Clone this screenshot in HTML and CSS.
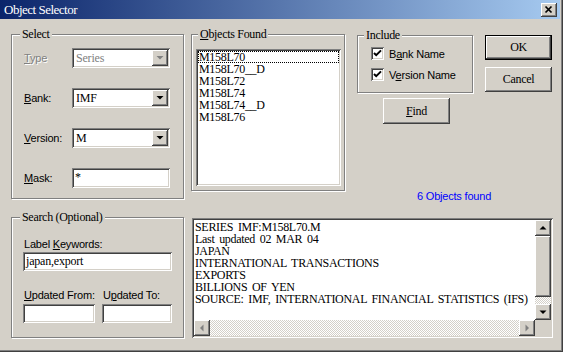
FILE: index.html
```html
<!DOCTYPE html>
<html>
<head>
    <title>Object Selector</title>
    <link rel="stylesheet" href="styles.css">
</head>
<body>
<div class="window">
    <div class="titlebar">
        <span class="title">Object Selector</span>
        <div class="close">
            <svg width="16" height="14" viewBox="0 0 16 14"><path d="M4.5 3.5l6 6M10.5 3.5l-6 6" stroke="#000" stroke-width="1.7"/></svg>
        </div>
    </div>

    <div class="client">
        <div class="top-row">
            <div class="group select-group">
                <div class="group-title">Select</div>
                <div class="fields">
                    <div class="field-row disabled">
                        <span class="label"><u>T</u>ype</span>
                        <div class="combo">
                            <span class="value">Series</span>
                            <span class="drop"><svg width="12" height="12" viewBox="0 0 12 12"><path d="M2.5 4h7l-3.5 3.5z" fill="#808080"/></svg></span>
                        </div>
                    </div>
                    <div class="field-row">
                        <span class="label"><u>B</u>ank:</span>
                        <div class="combo">
                            <span class="value">IMF</span>
                            <span class="drop"><svg width="12" height="12" viewBox="0 0 12 12"><path d="M2.5 4h7l-3.5 3.5z"/></svg></span>
                        </div>
                    </div>
                    <div class="field-row">
                        <span class="label"><u>V</u>ersion:</span>
                        <div class="combo">
                            <span class="value">M</span>
                            <span class="drop"><svg width="12" height="12" viewBox="0 0 12 12"><path d="M2.5 4h7l-3.5 3.5z"/></svg></span>
                        </div>
                    </div>
                    <div class="field-row">
                        <span class="label"><u>M</u>ask:</span>
                        <div class="field mask">*</div>
                    </div>
                </div>
            </div>

            <div class="group objects-group">
                <div class="group-title"><u>O</u>bjects Found</div>
                <div class="listbox">
                    <div class="item focused">M158L70</div>
                    <div class="item">M158L70__D</div>
                    <div class="item">M158L72</div>
                    <div class="item">M158L74</div>
                    <div class="item">M158L74__D</div>
                    <div class="item">M158L76</div>
                </div>
            </div>

            <div class="right-col">
                <div class="include-row">
                    <div class="group include-group">
                        <div class="group-title">Include</div>
                        <div class="checks">
                            <div class="check-row">
                                <span class="checkbox"><svg width="9" height="9" viewBox="0 0 9 9"><path d="M1 4l2.2 2.2L8 1.4" stroke="#000" stroke-width="2" fill="none"/></svg></span>
                                <span>B<u>a</u>nk Name</span>
                            </div>
                            <div class="check-row">
                                <span class="checkbox"><svg width="9" height="9" viewBox="0 0 9 9"><path d="M1 4l2.2 2.2L8 1.4" stroke="#000" stroke-width="2" fill="none"/></svg></span>
                                <span>V<u>e</u>rsion Name</span>
                            </div>
                        </div>
                    </div>
                    <div class="buttons">
                        <div class="btn default">OK</div>
                        <div class="btn">Cancel</div>
                    </div>
                </div>
                <div class="btn find"><u>F</u>ind</div>
                <div class="status">6 Objects found</div>
            </div>
        </div>

        <div class="bottom-row">
            <div class="group search-group">
                <div class="group-title">Search (Optional)</div>
                <div class="kw-label">Label <u>K</u>eywords:</div>
                <div class="field keywords">japan,export</div>
                <div class="updated">
                    <span><u>U</u>pdated From:</span>
                    <span>U<u>p</u>dated To:</span>
                    <div class="field"></div>
                    <div class="field"></div>
                </div>
            </div>

            <div class="textbox">
                <div class="text">SERIES IMF:M158L70.M
Last updated 02 MAR 04
JAPAN
INTERNATIONAL TRANSACTIONS
EXPORTS
BILLIONS OF YEN
SOURCE: IMF, INTERNATIONAL FINANCIAL STATISTICS (IFS)</div>
                <div class="vscroll">
                    <span class="sb-btn"><svg width="12" height="12" viewBox="0 0 12 12"><path d="M2.5 7.5h7L6 4z"/></svg></span>
                    <span class="sb-thumb"></span>
                    <span class="sb-track"></span>
                    <span class="sb-btn"><svg width="12" height="12" viewBox="0 0 12 12"><path d="M2.5 4.5h7L6 8z"/></svg></span>
                </div>
                <div class="hscroll">
                    <span class="sb-btn"><svg width="12" height="12" viewBox="0 0 12 12"><path d="M7.5 2.5v7L4 6z" fill="#808080"/></svg></span>
                    <span class="sb-track"></span>
                    <span class="sb-btn"><svg width="12" height="12" viewBox="0 0 12 12"><path d="M4.5 2.5v7L8 6z" fill="#808080"/></svg></span>
                </div>
                <div class="corner"></div>
            </div>
        </div>
    </div>
</div>
</body>
</html>
```

FILE: styles.css
```css
body { margin: 0; background: #d4d0c8; font-family: "Liberation Sans", Arial, sans-serif; font-size: 11px; letter-spacing: -0.2px; color: #000; }
u { text-decoration-thickness: 1px; text-underline-offset: 1px; }

.window { width: 563px; height: 352px; box-sizing: border-box; padding: 0 3px 4px 0; background: #d4d0c8; box-shadow: inset -1px -1px #404040, inset -2px -2px #808080; }

.titlebar { height: 19px; display: flex; align-items: center; justify-content: space-between; padding: 0 3px 0 4px; background: linear-gradient(to right, #0a246a, #a6caf0); }
.title { color: #fff; font-family: "Liberation Serif", "Times New Roman", serif; font-size: 13px; letter-spacing: -0.5px; }
.close { width: 16px; height: 14px; background: #d4d0c8; box-shadow: inset -1px -1px #404040, inset 1px 1px #fff, inset -2px -2px #808080; display: flex; }

/* raised / sunken edges, win classic */
.btn, .drop, .sb-btn, .sb-thumb { background: #d4d0c8; box-shadow: inset -1px -1px #404040, inset 1px 1px #fff, inset -2px -2px #808080; }
.combo, .field, .listbox, .textbox, .checkbox { background: #fff; box-shadow: inset 1px 1px #808080, inset -1px -1px #fff, inset 2px 2px #404040, inset -2px -2px #d4d0c8; }

.group { box-sizing: border-box; border: 1px solid #808080; box-shadow: inset 1px 1px #fff, 1px 1px #fff; }
.group-title { width: fit-content; height: 14px; margin: -8px 0 0 8px; padding: 0 2px; background: #d4d0c8; font-family: "Liberation Serif", "Times New Roman", serif; font-size: 12px; line-height: 14px; letter-spacing: -0.3px; }

.top-row { height: 180px; display: flex; align-items: flex-start; padding-left: 11px; }

.select-group { width: 173px; height: 165px; margin-top: 15px; }
.fields { margin-top: 7px; padding-left: 12px; display: flex; flex-direction: column; gap: 20px; }
.field-row { height: 20px; display: flex; align-items: center; }
.label { width: 48px; }
.disabled .label, .disabled .value { color: #808080; text-shadow: 1px 1px #fff; }
.combo { width: 98px; height: 20px; box-sizing: border-box; padding: 2px; display: flex; }
.value { flex: 1; padding-left: 2px; font-family: "Liberation Serif", "Times New Roman", serif; font-size: 12px; line-height: 16px; }
.drop { width: 16px; height: 16px; display: flex; align-items: center; justify-content: center; }
.field { box-sizing: border-box; height: 19px; padding: 2px 3px; font-family: "Liberation Serif", "Times New Roman", serif; font-size: 12px; line-height: 15px; }
.field.mask { width: 98px; height: 20px; }

.objects-group { width: 154px; height: 157px; margin: 15px 0 0 7px; }
.objects-group .group-title { margin-left: 6px; }
.listbox { width: 145px; height: 137px; box-sizing: border-box; margin: 8px 0 0 4px; padding: 2px; font-family: "Liberation Serif", "Times New Roman", serif; font-size: 12px; letter-spacing: -0.3px; }
.item { height: 12px; line-height: 12px; padding-left: 1px; }
.item.focused { outline: 1px dotted #000; outline-offset: -1px; }

.right-col { width: 196px; margin: 16px 0 0 12px; }
.include-row { display: flex; align-items: flex-start; }
.include-group { width: 116px; height: 58px; }
.include-group .group-title { margin-left: 6px; }
.checks { margin-top: 5px; padding-left: 13px; display: flex; flex-direction: column; gap: 8px; }
.check-row { height: 13px; display: flex; align-items: center; gap: 5px; }
.checkbox { width: 13px; height: 13px; display: flex; align-items: center; justify-content: center; }
.buttons { margin-left: 12px; display: flex; flex-direction: column; gap: 7px; }
.btn { width: 67px; height: 25px; box-sizing: border-box; display: flex; align-items: center; justify-content: center; font-family: "Liberation Serif", "Times New Roman", serif; font-size: 12px; letter-spacing: -0.3px; }
.btn.default { border: 1px solid #000; }
.btn.find { height: 26px; margin: 5px 0 0 26px; }
.status { margin-top: 66px; padding-left: 60px; line-height: 13px; color: #0000ff; }

.bottom-row { display: flex; align-items: flex-start; padding-left: 11px; margin-top: 18px; }
.search-group { width: 173px; height: 121px; }
.kw-label { margin: 14px 0 0 12px; line-height: 13px; }
.field.keywords { width: 149px; margin: 1px 0 0 11px; }
.updated { display: grid; grid-template-columns: 79px 70px; margin: 18px 0 0 11px; line-height: 13px; }
.updated span { padding-left: 1px; }
.updated .field { margin-top: 2px; }
.updated .field:first-of-type { width: 72px; }

.textbox { width: 361px; height: 120px; box-sizing: border-box; margin: 1px 0 0 8px; padding: 2px; display: grid; grid-template-columns: 1fr 16px; grid-template-rows: 1fr 16px; }
.text { overflow: hidden; white-space: pre; padding: 1px 0 0 1px; font-family: "Liberation Serif", "Times New Roman", serif; font-size: 12px; line-height: 12px; letter-spacing: -0.3px; word-spacing: 2px; }
.vscroll { display: grid; grid-template-rows: 16px 61px 1fr 16px; }
.hscroll { display: grid; grid-template-columns: 16px 1fr 16px; }
.sb-btn { display: flex; align-items: center; justify-content: center; }
.sb-track { background: repeating-conic-gradient(#fff 0 25%, #d4d0c8 0 50%) 0 0 / 2px 2px; }
.corner { background: #d4d0c8; }
```
